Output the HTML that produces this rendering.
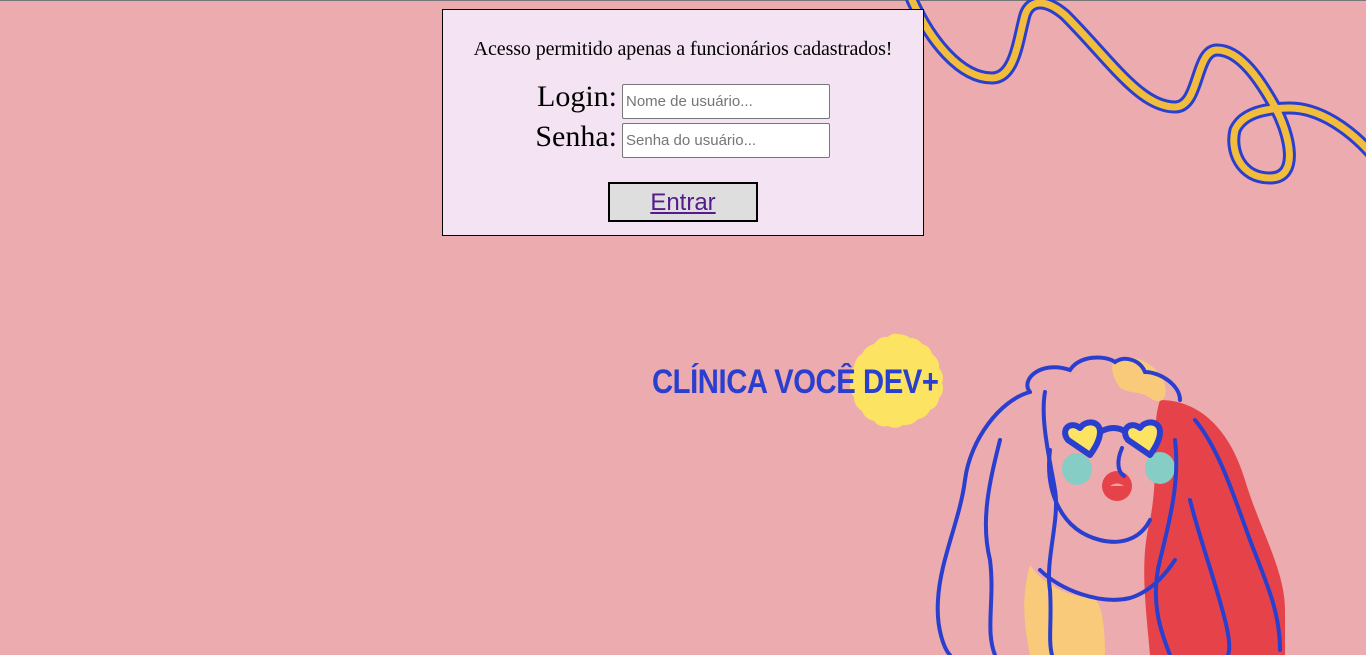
<!DOCTYPE html>
<html><head><meta charset="utf-8"><style>
html,body{margin:0;padding:0}
body{width:1366px;height:655px;background:#ecabaf;position:relative;overflow:hidden;border-top:1px solid #777;box-sizing:border-box}
.box{position:absolute;left:442px;top:8px;width:480px;height:225px;border:1px solid #000;background:#f4e4f3;font-family:"Liberation Serif",serif;z-index:2}
.msg{position:absolute;top:28px;left:0;width:100%;text-align:center;font-size:20px;letter-spacing:-0.1px}
.lbl{position:absolute;font-size:30px;right:306px}
.inp{position:absolute;left:179px;width:208px;height:35px;border:1px solid #767676;border-radius:2px;background:#fff;box-sizing:border-box;font-family:"Liberation Sans",sans-serif;font-size:15px;color:#757575;padding:8px 3px}
.btn{position:absolute;left:165px;top:172px;width:150px;height:40px;box-sizing:border-box;border:2px solid #000;background:#dedede;text-align:center;font-family:"Liberation Sans",sans-serif;font-size:24px;line-height:38px;color:#551a8b;text-decoration:underline}
.logo{position:absolute;left:652px;top:361px;font-family:"Liberation Sans",sans-serif;font-weight:bold;font-size:34px;color:#2b3fcf;letter-spacing:-0.5px;transform:scaleX(0.86);transform-origin:left;z-index:2;line-height:40px}
svg{position:absolute;left:0;top:-1px}
</style></head><body>
<svg width="1366" height="655" viewBox="0 0 1366 655">
<g fill="none" stroke-linecap="round">
<path d="M912,0 C930,40 960,78 992,78 C1015,78 1018,40 1025,15 C1030,0 1045,-2 1065,15 C1110,60 1140,107 1175,107 C1200,107 1195,50 1217,50 C1240,50 1260,80 1275,107 C1290,135 1300,178 1270,178 C1240,178 1230,150 1235,130 C1245,108 1280,108 1290,108 C1320,108 1350,130 1370,152" stroke="#2b3fcf" stroke-width="13"/>
<path d="M912,0 C930,40 960,78 992,78 C1015,78 1018,40 1025,15 C1030,0 1045,-2 1065,15 C1110,60 1140,107 1175,107 C1200,107 1195,50 1217,50 C1240,50 1260,80 1275,107 C1290,135 1300,178 1270,178 C1240,178 1230,150 1235,130 C1245,108 1280,108 1290,108 C1320,108 1350,130 1370,152" stroke="#f2bd3c" stroke-width="7"/>
</g>
<path d="M897,334 Q905,334 910,338 Q918,338 922,344 Q930,346 932,354 Q940,360 939,368 Q945,375 942,383 Q945,392 939,398 Q938,407 930,410 Q926,418 918,419 Q912,426 903,425 Q896,430 888,426 Q879,428 874,421 Q865,419 862,411 Q854,406 854,397 Q848,390 851,382 Q848,373 854,367 Q855,358 862,354 Q866,346 874,344 Q880,336 888,337 Q892,333 897,334Z" fill="#fde362"/>
<path d="M1160,400 C1200,400 1230,430 1245,480 C1260,530 1285,570 1285,610 L1285,655 L1150,655 C1145,600 1140,560 1150,520 C1160,470 1150,430 1160,400Z" fill="#e54349"/>
<path d="M1030,565 C1020,600 1025,630 1030,655 L1105,655 C1105,620 1100,595 1090,598 C1060,595 1040,580 1030,565Z" fill="#f9ca79"/>
<path d="M1115,360 C1130,350 1160,365 1165,385 C1168,400 1160,405 1150,398 C1140,390 1125,395 1118,385 C1112,375 1110,365 1115,360Z" fill="#f9ca79"/>
<ellipse cx="1077" cy="469" rx="15" ry="16" fill="#86cdc6"/>
<ellipse cx="1160" cy="468" rx="15" ry="16" fill="#86cdc6"/>
<ellipse cx="1117" cy="486" rx="15" ry="15" fill="#e54349"/>
<path d="M1110,486 Q1117,481 1124,486Z" fill="#f2a0a0"/>
<g fill="none" stroke="#2b3fcf" stroke-width="4" stroke-linecap="round">
<path d="M1030,392 C1020,380 1040,360 1070,370 C1080,355 1105,355 1115,362 C1125,355 1140,360 1145,372 C1160,372 1180,385 1180,400"/>
<path d="M1030,392 C1000,400 970,440 965,480 C960,520 940,560 938,600 C936,630 945,650 950,655"/>
<path d="M1045,392 C1040,420 1050,460 1055,490 C1060,520 1045,560 1050,590 C1052,620 1048,640 1052,655"/>
<path d="M1050,450 C1045,490 1060,530 1100,540 C1120,545 1140,540 1150,520"/>
<path d="M1040,570 C1060,590 1100,605 1130,598 C1150,592 1165,575 1175,560"/>
<path d="M1175,440 C1180,480 1170,520 1160,560 C1150,600 1160,630 1170,655"/>
<path d="M1195,420 C1220,450 1235,500 1250,540 C1265,580 1280,610 1280,650"/>
<path d="M1000,440 C990,480 980,520 990,560 C995,600 985,630 995,655"/>
<path d="M1190,500 C1200,540 1215,580 1225,620 C1230,640 1230,650 1228,655"/>
<path d="M1122,448 C1116,462 1118,472 1124,476"/>
</g>
<g stroke="#2b3fcf" stroke-width="6" fill="#fde362" stroke-linejoin="round">
<path d="M1090,455 L1068,440 C1060,430 1070,420 1080,428 C1085,420 1100,420 1100,432 C1100,440 1095,448 1090,455Z"/>
<path d="M1150,455 L1128,440 C1120,430 1130,420 1140,428 C1145,420 1160,420 1160,432 C1160,440 1155,448 1150,455Z"/>
<path d="M1100,432 Q1114,424 1126,432" fill="none"/>
</g>
</svg>
<div class="logo">CLÍNICA VOCÊ DEV+</div>
<div class="box">
<div class="msg">Acesso permitido apenas a funcionários cadastrados!</div>
<div class="lbl" style="top:70px">Login:</div>
<div class="lbl" style="top:110px">Senha:</div>
<div class="inp" style="top:74px">Nome de usuário...</div>
<div class="inp" style="top:113px">Senha do usuário...</div>
<div class="btn">Entrar</div>
</div>
</body></html>
